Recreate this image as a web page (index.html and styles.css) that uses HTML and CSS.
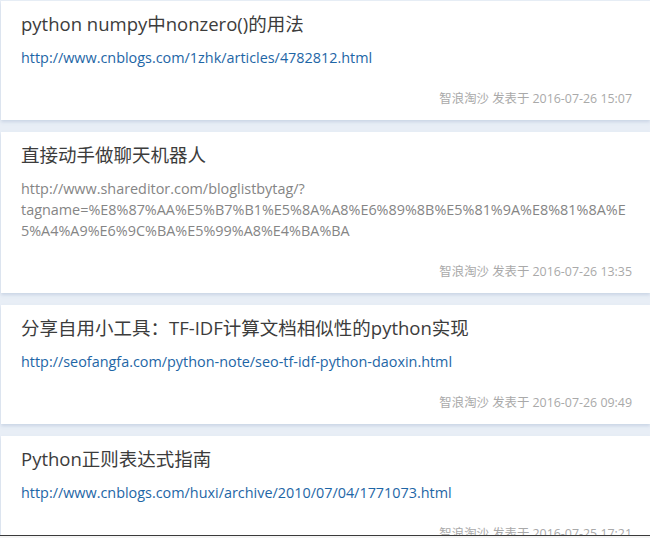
FILE: index.html
```html
<!DOCTYPE html>
<html lang="zh-CN">
<head>
<meta charset="utf-8">
<link rel="stylesheet" href="styles.css">
</head>
<body>
<div class="list">
  <div class="card">
    <div class="title">python numpy中nonzero()的用法</div>
    <a class="url" href="#">http://www.cnblogs.com/1zhk/articles/4782812.html</a>
    <div class="meta">智浪淘沙 发表于 2016-07-26 15:07</div>
  </div>
  <div class="card">
    <div class="title">直接动手做聊天机器人</div>
    <a class="url visited" href="#">http://www.shareditor.com/bloglistbytag/?tagname=%E8%87%AA%E5%B7%B1%E5%8A%A8%E6%89%8B%E5%81%9A%E8%81%8A%E5%A4%A9%E6%9C%BA%E5%99%A8%E4%BA%BA</a>
    <div class="meta">智浪淘沙 发表于 2016-07-26 13:35</div>
  </div>
  <div class="card">
    <div class="title">分享自用小工具：TF-IDF计算文档相似性的python实现</div>
    <a class="url" href="#">http://seofangfa.com/python-note/seo-tf-idf-python-daoxin.html</a>
    <div class="meta">智浪淘沙 发表于 2016-07-26 09:49</div>
  </div>
  <div class="card">
    <div class="title">Python正则表达式指南</div>
    <a class="url" href="#">http://www.cnblogs.com/huxi/archive/2010/07/04/1771073.html</a>
    <div class="meta">智浪淘沙 发表于 2016-07-25 17:21</div>
  </div>
</div>
<div class="edge"></div>
</body>
</html>
```
FILE: styles.css
```css
html, body {
  margin: 0;
  padding: 0;
  background: #e8eef6;
  height: 538px;
  overflow: hidden;
}
body {
  font-family: "Open Sans", "Noto Sans CJK SC", sans-serif;
}
.list {
  display: flex;
  flex-direction: column;
  gap: 12px;
  padding: 1px 0 0 1px;
}
.card {
  background: #fff;
  box-shadow: 0 2px 3px rgba(150, 170, 200, 0.35);
  padding: 12px 18px 11px 20px;
  display: flex;
  flex-direction: column;
}
.title {
  font-size: 18.5px;
  line-height: 22px;
  color: #3c3c3c;
}
.url {
  margin-top: 12px;
  font-size: 14.4px;
  line-height: 21px;
  color: #1e66a6;
  text-decoration: none;
  overflow-wrap: anywhere;
}
.url.visited {
  color: #858585;
}
.meta {
  margin-top: 21px;
  font-size: 12.4px;
  line-height: 20px;
  color: #a9a9a9;
  text-align: right;
}
.edge {
  position: fixed;
  left: 0;
  right: 0;
  bottom: 0;
  height: 2px;
  background: #f4f4f4;
  border-top: 1px solid #3a3a3a;
}
```
